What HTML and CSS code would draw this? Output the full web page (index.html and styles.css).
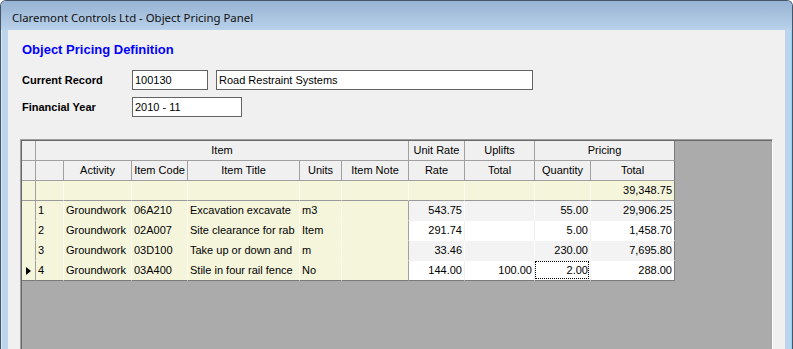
FILE: index.html
```html
<!DOCTYPE html>
<html>
<head>
<meta charset="utf-8">
<title>Object Pricing Panel</title>
<link rel="stylesheet" href="styles.css">
</head>
<body>
<div class="window">
  <div class="titlebar"><span class="title">Claremont Controls Ltd - Object Pricing Panel</span></div>
  <div class="frame">
    <div class="client">
      <h1 class="heading">Object Pricing Definition</h1>
      <div class="fields">
        <div class="field-row">
          <span class="lbl">Current Record</span>
          <div class="box box-code">100130</div>
          <div class="box box-name">Road Restraint Systems</div>
        </div>
        <div class="field-row">
          <span class="lbl">Financial Year</span>
          <div class="box box-year">2010 - 11</div>
        </div>
      </div>
      <div class="gridctl">
        <div class="dgv">
          <!-- header row 1 -->
          <div class="c hc"></div>
          <div class="c hc span-item">Item</div>
          <div class="c hc">Unit Rate</div>
          <div class="c hc">Uplifts</div>
          <div class="c hc span-pricing last">Pricing</div>
          <!-- header row 2 -->
          <div class="c hc"></div>
          <div class="c hc"></div>
          <div class="c hc">Activity</div>
          <div class="c hc">Item Code</div>
          <div class="c hc">Item Title</div>
          <div class="c hc">Units</div>
          <div class="c hc">Item Note</div>
          <div class="c hc">Rate</div>
          <div class="c hc">Total</div>
          <div class="c hc">Quantity</div>
          <div class="c hc last">Total</div>
          <!-- totals row -->
          <div class="c tc rhc"></div>
          <div class="c tc"></div>
          <div class="c tc"></div>
          <div class="c tc"></div>
          <div class="c tc"></div>
          <div class="c tc"></div>
          <div class="c tc"></div>
          <div class="c tc"></div>
          <div class="c tc"></div>
          <div class="c tc"></div>
          <div class="c tc num last">39,348.75</div>
          <!-- row 1 -->
          <div class="c rh"></div>
          <div class="c bc">1</div>
          <div class="c bc">Groundwork</div>
          <div class="c bc">06A210</div>
          <div class="c bc">Excavation excavate</div>
          <div class="c bc">m3</div>
          <div class="c bc note"></div>
          <div class="c nc odd num">543.75</div>
          <div class="c nc odd num"></div>
          <div class="c nc odd num">55.00</div>
          <div class="c nc odd num last">29,906.25</div>
          <!-- row 2 -->
          <div class="c rh"></div>
          <div class="c bc">2</div>
          <div class="c bc">Groundwork</div>
          <div class="c bc">02A007</div>
          <div class="c bc">Site clearance for rab</div>
          <div class="c bc">Item</div>
          <div class="c bc note"></div>
          <div class="c nc even num">291.74</div>
          <div class="c nc even num"></div>
          <div class="c nc even num">5.00</div>
          <div class="c nc even num last">1,458.70</div>
          <!-- row 3 -->
          <div class="c rh"></div>
          <div class="c bc">3</div>
          <div class="c bc">Groundwork</div>
          <div class="c bc">03D100</div>
          <div class="c bc">Take up or down and</div>
          <div class="c bc">m</div>
          <div class="c bc note"></div>
          <div class="c nc odd num">33.46</div>
          <div class="c nc odd num"></div>
          <div class="c nc odd num">230.00</div>
          <div class="c nc odd num last">7,695.80</div>
          <!-- row 4 -->
          <div class="c rh bottom"><span class="arrow"></span></div>
          <div class="c bc bottom">4</div>
          <div class="c bc bottom">Groundwork</div>
          <div class="c bc bottom">03A400</div>
          <div class="c bc bottom">Stile in four rail fence</div>
          <div class="c bc bottom">No</div>
          <div class="c bc note bottom"></div>
          <div class="c nc even num bottom">144.00</div>
          <div class="c nc even num bottom">100.00</div>
          <div class="c nc even num bottom focus">2.00</div>
          <div class="c nc even num bottom last">288.00</div>
        </div>
      </div>
    </div>
  </div>
</div>
</body>
</html>
```
FILE: styles.css
```css
* { box-sizing: border-box; margin: 0; padding: 0; }
html, body { width: 793px; height: 349px; overflow: hidden; }
body {
  font-family: "Liberation Sans", Arial, sans-serif;
  font-size: 11px;
  color: #000;
  background: #fff;
}
.window {
  width: 793px;
  height: 349px;
  display: flex;
  flex-direction: column;
  background: #bcd4ec;
  border: 1px solid #46566a;
  border-bottom: none;
  border-radius: 6px 6px 0 0;
  overflow: hidden;
  box-shadow: inset -1px 0 0 #86dcf8, inset 1px 0 0 #dbe7f3;
}
.titlebar {
  height: 29px;
  flex: none;
  background: linear-gradient(#97b3d3, #b9d1ea);
  padding: 9px 0 0 11px;
}
.title {
  font-family: "Noto Sans", "Open Sans", sans-serif;
  font-size: 11.4px;
  line-height: 16px;
  color: #111;
  white-space: nowrap;
}
.frame {
  flex: 1;
  display: flex;
  padding: 0 7px;
  min-height: 0;
}
.client {
  flex: 1;
  min-width: 0;
  background: #f0f0f0;
  display: flex;
  flex-direction: column;
  padding: 12px 0 0 14px;
}
.heading {
  font-size: 13px;
  font-weight: bold;
  line-height: 15px;
  color: #0000ff;
}
.fields {
  margin-top: 13px;
  display: flex;
  flex-direction: column;
  gap: 7px;
}
.field-row {
  display: flex;
  height: 20px;
  align-items: center;
}
.lbl {
  width: 110px;
  font-weight: bold;
  line-height: 20px;
}
.box {
  height: 20px;
  border: 1px solid #646464;
  background: #fff;
  padding-left: 2px;
  line-height: 18px;
  white-space: nowrap;
}
.box-code { width: 76px; }
.box-name { width: 317px; margin-left: 8px; }
.box-year { width: 110px; }

.gridctl {
  margin-top: 22px;
  margin-left: -2px;
  width: 753px;
  flex: 1;
  background: #ababab;
  border-top: 1px solid #a0a0a0;
  border-left: 1px solid #a0a0a0;
  border-right: 1px solid #ffffff;
  box-shadow: inset 1px 1px 0 #696969, inset -1px 0 0 #a8a8a8;
  padding: 1px 0 0 1px;
}
.dgv {
  display: grid;
  grid-template-columns: 14px 28px 68px 56px 112px 42px 67px 56px 70px 56px 84px;
  grid-auto-rows: 20px;
  width: 653px;
}
.c {
  border-right: 1px solid #a0a0a0;
  border-bottom: 1px solid #a0a0a0;
  white-space: nowrap;
  overflow: hidden;
  line-height: 19px;
  padding: 0 2px;
}
.hc {
  background: #f0f0f0;
  text-align: center;
  padding: 0;
}
.span-item { grid-column: span 6; }
.span-pricing { grid-column: span 2; }
.tc {
  background: #f5f5dc;
  border-right-color: #fbfbef;
  border-bottom-color: #9a9a9a;
}
.tc.rhc { border-right-color: #a0a0a0; }
.rh {
  background: #f5f5dc;
  border-right-color: #a0a0a0;
  border-bottom-color: #f5f5dc;
  display: flex;
  align-items: center;
  justify-content: center;
  padding: 0;
}
.bc {
  background: #f5f5dc;
  border-right-color: #fafaee;
  border-bottom-color: #f5f5dc;
}
.bc.note { border-right-color: #a0a0a0; }
.nc.odd {
  background: #f3f3f3;
  border-right-color: #fdfdfd;
  border-bottom-color: #f3f3f3;
}
.nc.even {
  background: #ffffff;
  border-right-color: #f0f0f0;
  border-bottom-color: #ffffff;
}
.num { text-align: right; }
.c.last { border-right-color: #7a7a7a; }
.c.bottom { border-bottom-color: #7a7a7a; }
.arrow {
  width: 0;
  height: 0;
  border-left: 5px solid #000;
  border-top: 4px solid transparent;
  border-bottom: 4px solid transparent;
}
.focus { position: relative; }
.focus::after {
  content: "";
  position: absolute;
  top: 0;
  left: 0;
  right: 1px;
  bottom: 1px;
  border: 1px dotted #000;
}
```
